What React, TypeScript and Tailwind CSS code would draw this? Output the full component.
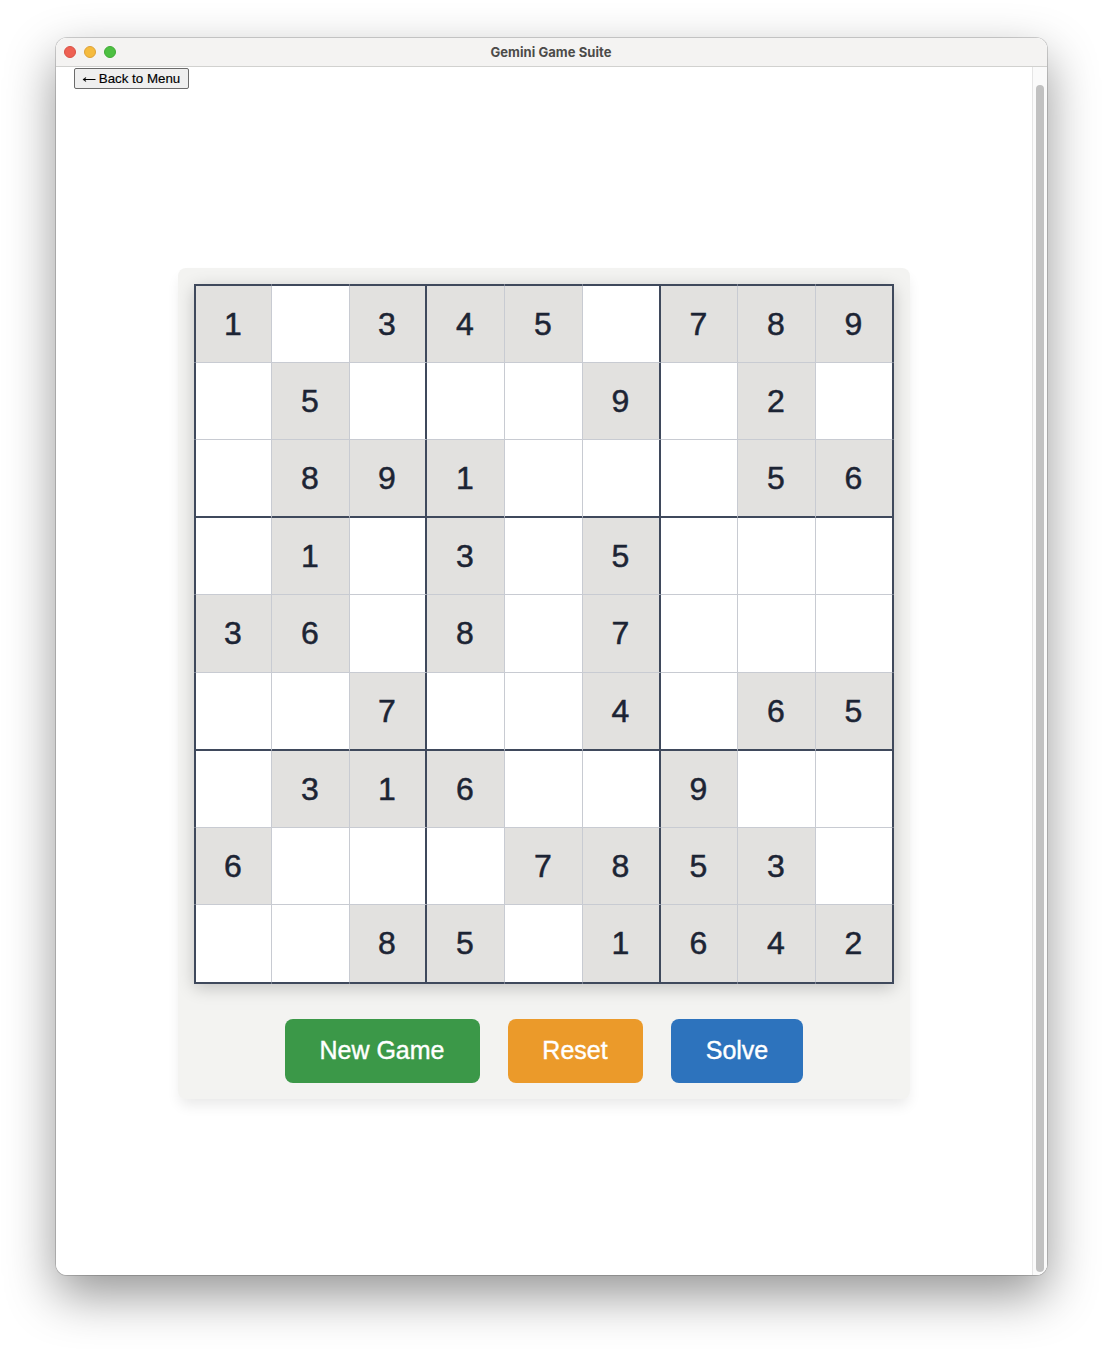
import React from "react";

const board = [
  "1.345.789",
  ".5...9.2.",
  ".891...56",
  ".1.3.5...",
  "36.8.7...",
  "..7..4.65",
  ".316..9..",
  "6...7853.",
  "..85.1642",
];

const indices = [0, 1, 2, 3, 4, 5, 6, 7, 8];

function rightEdge(col: number) {
  if (col === 8) return "";
  return col % 3 === 2 ? "border-r-2 border-r-[#3f495c]" : "border-r border-r-[#c9cbd2]";
}

function bottomEdge(row: number) {
  if (row === 8) return "";
  return row % 3 === 2 ? "border-b-2 border-b-[#3f495c]" : "border-b border-b-[#c9cbd2]";
}

function TitleBar() {
  return (
    <header className="relative flex h-[29px] items-center justify-center border-b border-[#d1d1cf] bg-[#f4f3f2]">
      <div className="absolute left-2 top-2 flex gap-2">
        <span className="size-3 rounded-full border border-[#d95145] bg-[#ee6153]" />
        <span className="size-3 rounded-full border border-[#dda238] bg-[#f5bb3e]" />
        <span className="size-3 rounded-full border border-[#40ab36] bg-[#4dc042]" />
      </div>
      <h1 className="mb-px mr-px whitespace-nowrap font-[Inter,sans-serif] text-[13px] font-bold leading-4 tracking-[0.06px] text-[#4c4b49]">
        Gemini Game Suite
      </h1>
    </header>
  );
}

function Board() {
  return (
    <div className="relative grid size-[700px] grid-cols-[76px_78px_77px_78px_78px_78px_77px_78px_76px] grid-rows-[77px_77px_78px_77px_78px_78px_77px_77px_77px] border-2 border-[#3f495c] shadow-[0_4px_16px_rgba(0,0,0,0.2)]">
      {board.map((line, row) =>
        line.split("").map((digit, col) => (
          <div
            key={`${row}-${col}`}
            className={`flex items-center justify-center pb-px pr-px text-[32px] leading-none text-[#1c2434] [-webkit-text-stroke:0.5px_#1c2434] ${
              digit === "." ? "bg-white" : "bg-[#e2e1df]"
            } ${rightEdge(col)} ${bottomEdge(row)}`}
          >
            {digit === "." ? "" : digit}
          </div>
        )),
      )}
      {/* Thin rules continue faintly across the heavy frame. */}
      <div className="pointer-events-none absolute -inset-[2px] grid grid-cols-[76px_78px_77px_78px_78px_78px_77px_78px_76px] px-[2px]">
        {indices.map((i) => (
          <div key={i} className={i % 3 === 2 ? "" : "border-r border-[#c9cbd2]/40"} />
        ))}
      </div>
      <div className="pointer-events-none absolute -inset-[2px] grid grid-rows-[77px_77px_78px_77px_78px_78px_77px_77px_77px] py-[2px]">
        {indices.map((i) => (
          <div key={i} className={i % 3 === 2 ? "" : "border-b border-[#c9cbd2]/40"} />
        ))}
      </div>
    </div>
  );
}

export default function App() {
  return (
    <div className="h-[1349px] w-[1103px] overflow-hidden bg-white pl-[56px] pt-[38px] font-['Liberation_Sans',Arial,sans-serif]">
      <div className="h-[1237px] w-[991px] rounded-[11px] shadow-[0_0_0_1px_rgba(0,0,0,0.17),0_20px_50px_rgba(0,0,0,0.42)]">
        <div className="flex h-full flex-col overflow-hidden rounded-[11px] bg-white">
          <TitleBar />
          <div className="flex flex-1">
            <main className="flex flex-1 flex-col">
              <button className="ml-[18px] mt-px flex h-[21px] w-[115px] items-center justify-center gap-[3px] rounded-[2px] border border-[#6b6b6b] bg-[#efefef] pr-px text-[13.33px] leading-none text-black [-webkit-text-stroke:0.15px_#000]">
                <svg width="14" height="9" viewBox="0 0 14 9" fill="none" stroke="currentColor" strokeWidth="1">
                  <path d="M13.5 5.5H1.5" />
                  <path d="M4 3.2L0.8 5.5L4 7.8L3 5.5Z" fill="currentColor" strokeWidth="0.3" />
                </svg>
                Back to Menu
              </button>
              <section className="ml-[122px] mt-[179px] flex h-[831px] w-[732px] flex-col items-center rounded-lg bg-[#f3f3f1] pt-4 shadow-[0_8px_14px_-2px_rgba(0,0,0,0.09)]">
                <Board />
                <div className="mt-[35px] flex gap-7 text-[25px] leading-none text-white [-webkit-text-stroke:0.4px_#fff]">
                  <button className="h-16 w-[195px] rounded-lg bg-[#3b9848] pb-0.5 pr-px">New Game</button>
                  <button className="h-16 w-[135px] rounded-lg bg-[#eb9a2a] pb-0.5 pr-px">Reset</button>
                  <button className="h-16 w-[132px] rounded-lg bg-[#2d73bd] pb-0.5">Solve</button>
                </div>
              </section>
            </main>
            <div className="w-[15px] border-l border-[#e5e5e5] bg-[#fafafa] pb-[3px] pl-[3px] pt-[18px]">
              <div className="h-full w-2 rounded-full bg-[#c1c1c1]" />
            </div>
          </div>
        </div>
      </div>
    </div>
  );
}
